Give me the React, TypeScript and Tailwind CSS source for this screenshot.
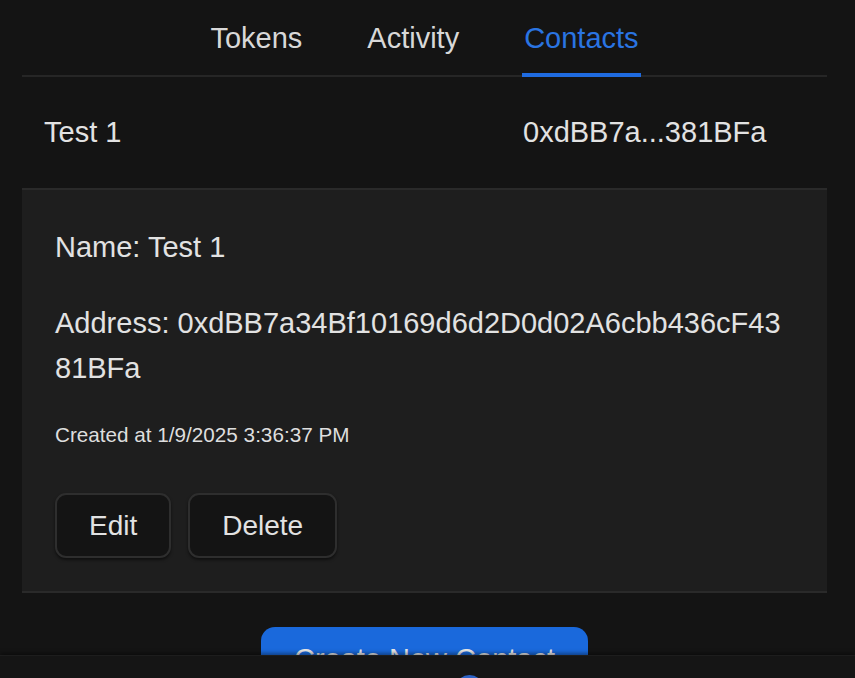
import React from 'react';

const tabs = ['Tokens', 'Activity', 'Contacts'];

export default function App() {
  const active = 'Contacts';

  return (
    <div className="relative h-[678px] w-[855px] overflow-hidden bg-[#141414] font-['Liberation_Sans',Arial,sans-serif] text-[#e2e2e2]">
      {/* Tabs */}
      <div className="ml-[22px] mr-[28px] border-b-2 border-[#262626]">
        <div className="flex justify-center gap-[61px]">
          {tabs.map((t) => (
            <div
              key={t}
              className={`relative h-[75px] px-[2px] pt-[20px] text-[29px] leading-[36px] ${
                t === active ? 'text-[#2a74e2]' : 'text-[#d8d8d8]'
              }`}
            >
              {t}
              {t === active && (
                <span className="absolute -bottom-[2px] left-0 right-0 h-[4px] bg-[#1f6be0]" />
              )}
            </div>
          ))}
        </div>
      </div>

      {/* Contact row */}
      <div className="ml-[22px] mr-[28px] flex h-[111px] items-center pl-[22px] text-[29px]">
        <div className="w-[479px]">Test 1</div>
        <div>0xdBB7a...381BFa</div>
      </div>

      {/* Expanded detail */}
      <div className="ml-[22px] mr-[28px] border-y-2 border-[#2a2a2a] bg-[#1e1e1e] pb-[33px] pl-[33px] pr-[40px] pt-[35px]">
        <p className="text-[29px] leading-[45px]">Name: Test 1</p>
        <p className="mt-[31px] break-all text-[29px] leading-[45px]">
          Address: 0xdBB7a34Bf10169d6d2D0d02A6cbb436cF4381BFa
        </p>
        <p className="mt-[30px] text-[20.7px] leading-[28px] text-[#dedede]">
          Created at 1/9/2025 3:36:37 PM
        </p>
        <div className="mt-[44px] flex gap-[17px]">
          <button className="h-[65px] rounded-[11px] border-2 border-[#2e2e2e] bg-[#141414] px-[32px] text-[28px] text-[#e2e2e2] shadow-[0_2px_3px_rgba(0,0,0,0.5)]">
            Edit
          </button>
          <button className="h-[65px] rounded-[11px] border-2 border-[#2e2e2e] bg-[#141414] px-[32px] text-[28px] text-[#e2e2e2] shadow-[0_2px_3px_rgba(0,0,0,0.5)]">
            Delete
          </button>
        </div>
      </div>

      {/* Create button */}
      <div className="ml-[22px] mr-[28px] mt-[34px] flex justify-center">
        <button className="h-[65px] w-[327px] rounded-[14px] bg-[#1a69dc] text-[29px] text-[#e8e8e8]">
          Create New Contact
        </button>
      </div>

      {/* Bottom nav (overlays content) */}
      <div className="absolute bottom-0 left-0 right-0 h-[23px] border-t border-[#1d1d1d] bg-[#151515] shadow-[0_-2px_4px_rgba(0,0,0,0.4)]">
        <div className="absolute left-[455px] top-[19px] h-[29px] w-[29px] rounded-full bg-[#2d63c8]" />
      </div>
    </div>
  );
}
